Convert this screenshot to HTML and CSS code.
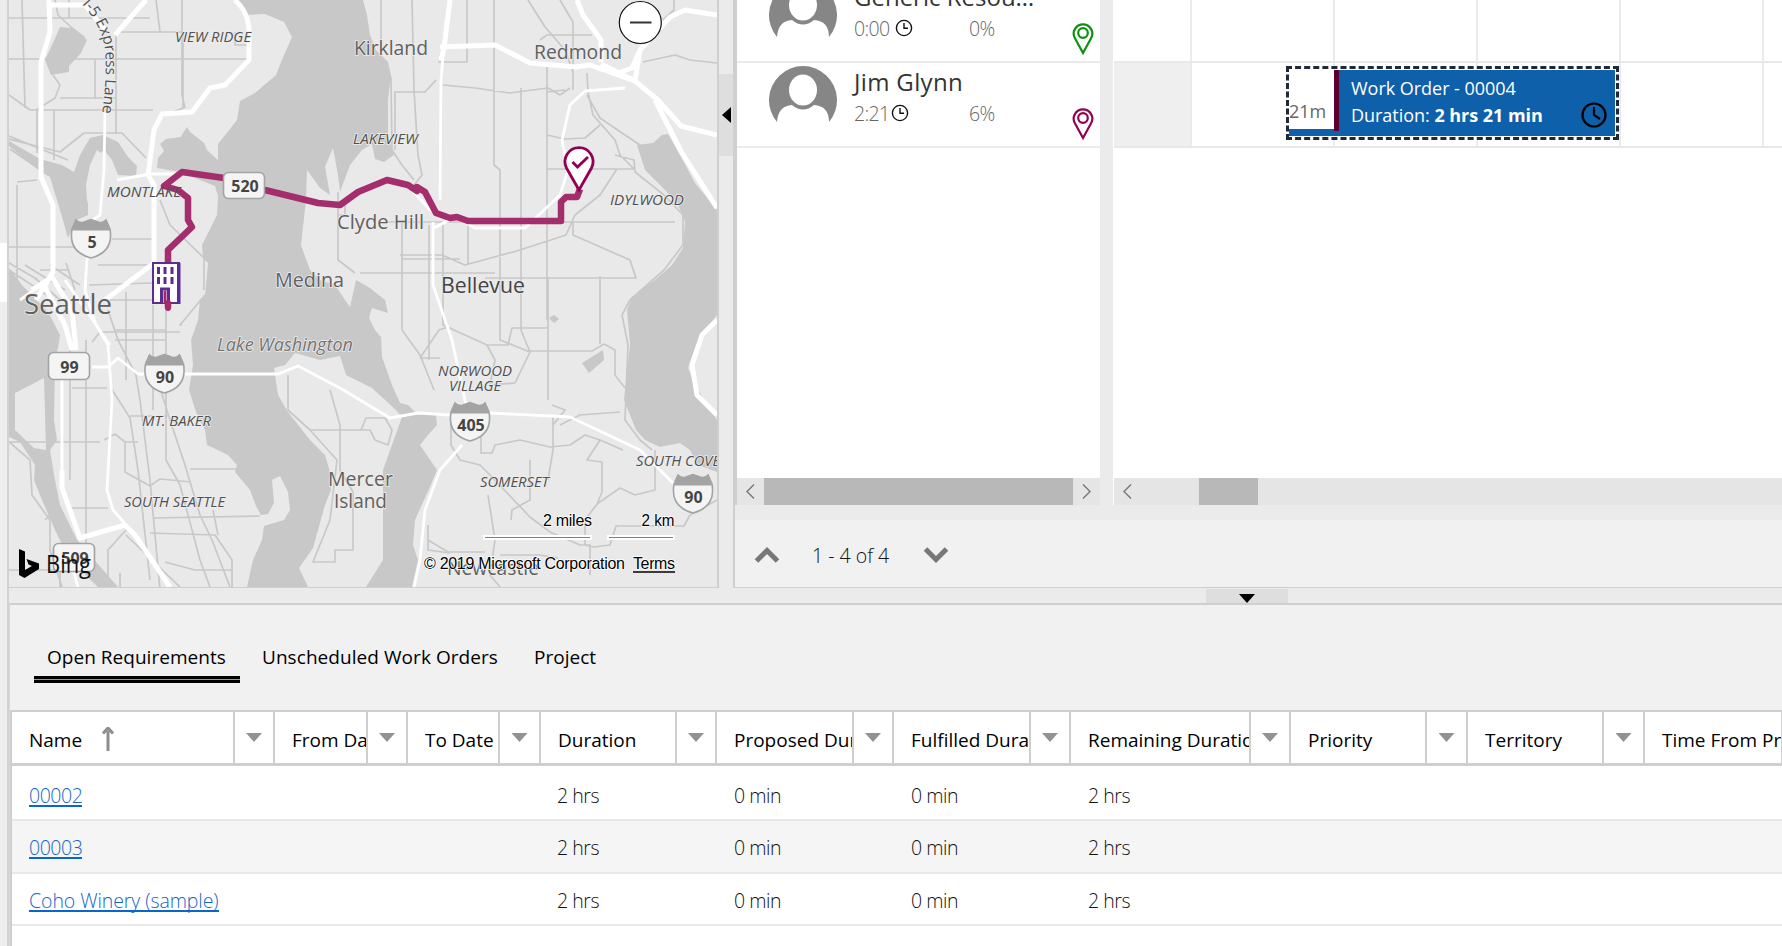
FILE: index.html
```html
<!DOCTYPE html>
<html lang="en">
<head>
<meta charset="utf-8">
<title>Schedule Board</title>
<link rel="stylesheet" href="styles.css">
</head>
<body>
<div class="app">
  <aside class="rail"></aside>
  <main class="board">
    <div class="top">
      <section class="map-panel">
        <svg class="map" viewBox="9 0 708 587" width="708" height="587">
          <defs>
            <path id="express" d="M82 4 Q104 28 105.500 55 Q107 80 101 122"/>
            <symbol id="interstate" viewBox="0 0 42 42">
              <path d="M6 2 Q10 6 14 4 L21 1.500 L28 4 Q32 6 36 2 L40 11 Q44 34 21 40 Q-2 34 2 11Z" fill="#f4f4f4" stroke="#a3a3a3" stroke-width="1.600"/>
              <path d="M6 2 Q10 6 14 4 L21 1.500 L28 4 Q32 6 36 2 L40 12.500 H2Z" fill="#a3a3a3"/>
            </symbol>
          </defs>
          <g class="water">
            <path d="M235 0L243 15L265 14L284 22L292 37L281 62L276 75L255 93L240 101L237 120L218 144V160L207 150L204 143L190 132L187 127L183 133L181 137L166 139L160 144L164 151L158 158L157 168L180 172L215 186L218 196L217 215L202 245L203 258L208 263L205 296L200 300L198 320L191 340L193 365L189 390L196 412L205 430L207 445L228 455L237 465L235 472L250 490L256 506L261 515L268 514L274 503L272 480L280 476L288 492L290 510L284 520L264 526L262 540L253 560L247 587H412L418 560L413 545L415 520L430 487L437 470L420 445L428 435L437 425L436 415L415 412L408 405L400 403L392 385L382 357L381 337L375 330L369 318L372 308L388 313L385 300L370 288L356 280L350 307L345 300L335 285L320 280L310 270L301 245L306 200L307 170L320 188L330 195L325 167L333 148L338 175L340 192L350 165L362 150L372 144L375 159L384 162L394 155L388 135V100L391 75L388 62L376 50L370 35L367 15L363 0Z"/>
            <path d="M637 145L653 143L662 135L668 134L680 155L695 183L717 210V315L706 330L696 345L688 368L695 385L717 420V472L698 465L690 450L680 443L660 447L645 440L636 430L624 400L630 345L627 310L632 297L655 280L672 265L683 248L685 222L678 205L665 190L645 170Z"/>
            <path d="M60 27L72 28L87 40L81 53L69 66V72L51 75L45 60L52 45Z"/>
            <path d="M9 141L40 159L62 165L74 172L80 155L90 138L103 135L118 142L128 157L137 166L136 176L118 175L112 160L104 150L93 160L88 180V215L77 220L68 238L60 210L50 177L36 168L9 146Z"/>
            <path d="M9 268L22 285L48 312L60 335L58 348L55 360L54 420L57 440L50 450L54 475L60 505L77 540L90 555L118 587H98L70 560L55 530L42 500L34 480L35 465L20 442L9 437Z"/>
            <path d="M582 363L603 350L604 360L589 373ZM549 318L554 315L559 319L554 323Z"/>
          </g>
          <path class="land" d="M274 368L285 365L295 353L320 360L340 356L346 375L372 388L396 410L402 417L383 470V560L366 587H308L299 568L313 548L325 505L331 490V475L325 455L310 440L288 412L278 395Z"/>
          <path class="land" d="M15 393L44 378L46 450L34 448L15 430ZM97 150L107 158L102 180L98 215L94 222L87 200L86 185L90 165Z"/>
          <g class="minor">
            <path d="M22 0L25 108M9 18H150M9 59H247M60 98H116M30 110H153M69 0V18M95 60V98M156 0L160 32H183V108L162 116M182 0V95L185 108M118 32H183M235 32V45H247M116 30V134M37 110V153M54 110V160M9 95L30 110M55 0L58 15L72 28L85 38M53 75L60 85L55 98L36 110M9 139L60 152L84 133H122L146 158M9 136L68 160M10 149L48 175M17 182L37 180M17 185V290M9 247H78M112 239H152M9 263L35 278L60 300M40 270H68M66 263L75 290M98 265H152M89 285L152 283M100 300H166M160 200L170 225L204 258V290"/>
            <path d="M9 270L50 297M25 265L65 290M50 265L80 285M108 310L118 340L136 375L140 400L150 480L160 590M126 292V380M153 305V410M166 308V460M180 332H100L92 342M205 295L180 325H182M115 330H165M115 340H165M70 345V480M86 340V545M72 388H107M111 388L130 418L138 470L150 580M9 442H100M104 440L115 434L125 442H138M125 442V472L150 486L160 479L191 482M166 460L180 485L200 560L210 587M156 375L170 420L185 465L200 515L212 540L230 587M130 416H168M70 508H108M190 469H237M153 518L260 516M150 533L215 535L232 560V587M165 562L195 570H232M213 510L218 535M126 530L108 550V582M126 535L180 587M9 442L30 460L32 495L50 520V550L62 587M9 570H60V587M120 573V587M57 508L45 520"/>
            <path d="M381 0V60L391 78L392 150L402 165L414 180M412 0L414 90L418 155L422 175L410 190M438 62H467V0M494 0V165L500 170V220M443 85L475 88L510 93L548 88L560 95L570 88M395 150V92H425L436 80M521 88V290M547 62V320M547 92L565 90M528 0L545 27L565 50L573 72M573 65V90M560 0L573 22V65M540 40L547 35H592M674 0V10L663 20M643 62L675 55L690 60L717 63M547 135L565 139L585 138L600 125M547 169H634L620 155L615 140L593 115L588 92L587 73M587 95L600 118L625 135L640 145M615 155L634 160L635 172L664 195L683 215V245L664 270L630 300L622 315L628 345L625 420L640 440L652 450M617 169L600 195L575 215L566 235L520 250L465 265L442 255H400M384 222H675M573 222V235L630 260L636 278H485M360 273H495M402 222V259H460M402 230V330L420 355L434 390M429 225V360M443 225V325L487 345L508 345L512 328H547M500 222V340L530 352M521 280V330L530 352L515 383M548 278V400M529 351H592L604 344L615 350V375L625 388M600 276V344M468 225V265"/>
            <path d="M420 358L439 330L448 327M420 358H440M487 345L495 360L490 385L515 383M451 415V445L460 460L480 465L490 475L530 517L550 532L580 545H590V575M481 420V453H492L495 445L520 440L550 447L570 445L585 435L600 440L623 450M553 415V450L548 480M530 460V500L512 510L511 520M620 412L580 415L560 425M552 405L565 410L553 425M655 450V490L635 495L620 488L597 504L585 520V545L594 547L610 545L616 526H684L690 515M600 440L587 460L602 462V492L597 504M488 495L495 540L490 575L500 587M428 525V550L450 553M428 540L448 552H485M500 555H540L558 558M330 390L340 425V470L353 492V550H335V562H313L330 520L337 460L310 430M310 430H370M361 430L366 418L385 418L392 430L388 445L375 440L370 430H361M288 375V410L310 430M338 192V260L355 273M338 215H345V200M690 515L717 500"/>
          </g>
          <g class="major">
            <path d="M49 0L50 32L41 62V177L53 205V272L36 300M49 5L85 5L105 30M146 0L115 35M235 0Q250 14 249 35V60L225 85L210 88L192 112L162 114L154 130L148 175L154 185V263L105 300"/>
            <path d="M450 0L444 48L441 60M440 47L495 45L530 63L576 67L590 65L635 81L640 50L670 17L685 10L717 15M577 0L583 15L601 40V62M601 64L635 81L658 100L681 126L717 135M655 100L682 153L717 208M640 50L632 68L615 74M717 320L702 335L692 365L697 395L717 415M32 290L52 277L72 310L76 350M45 287L65 325L72 350M62 470V488L80 538L125 525L135 535L170 587"/>
          </g>
          <g class="mid">
            <path d="M105 112L104 170L100 215L90 222M87 258L85 290L96 325L108 345L112 400L107 490L113 510L135 535M446 20L441 80L440 200M175 174H150L117 180M412 190L430 210L438 215M433 222V285L452 340L466 405M434 228L455 217L475 228H525L560 195L568 170L562 140L570 105L585 91L625 88M52 278L36 290M45 282L20 300M65 280L110 345M62 470V380M92 367H108L118 358L138 374H278L298 366L340 388L390 418L418 413L450 415M490 413L570 417L640 450L680 490M462 445L440 470L425 510L420 560L414 587M66 545L78 587"/>
          </g>
          <g class="place">
            <text x="175" y="41.500" textLength="76" lengthAdjust="spacingAndGlyphs">VIEW RIDGE</text>
            <text x="353" y="143.500" textLength="65" lengthAdjust="spacingAndGlyphs">LAKEVIEW</text>
            <text x="610" y="204.500" textLength="74" lengthAdjust="spacingAndGlyphs">IDYLWOOD</text>
            <text x="438" y="376" textLength="74" lengthAdjust="spacingAndGlyphs">NORWOOD</text>
            <text x="449" y="391" textLength="52" lengthAdjust="spacingAndGlyphs">VILLAGE</text>
            <text x="142" y="425.500" textLength="69" lengthAdjust="spacingAndGlyphs">MT. BAKER</text>
            <text x="124" y="506.500" textLength="101" lengthAdjust="spacingAndGlyphs">SOUTH SEATTLE</text>
            <text x="480" y="486.500" textLength="69" lengthAdjust="spacingAndGlyphs">SOMERSET</text>
            <text x="636" y="466" textLength="84" lengthAdjust="spacingAndGlyphs">SOUTH COVE</text>
          </g>
          <path class="route" d="M168 308V250L192 227L188 220V198L178 190L164 186L182 172L224 178L265 190L318 203L340 205L358 192L387 180L408 185L417 191V187L425 192L436 213L450 218L457 217L468 221H561V202L566 197H577L580 189"/>
          <text class="montlake" x="107" y="197" textLength="74" lengthAdjust="spacingAndGlyphs">MONTLAKE</text>
          <g class="town">
            <text x="354" y="55" textLength="74" lengthAdjust="spacingAndGlyphs">Kirkland</text>
            <text x="534" y="59" textLength="88" lengthAdjust="spacingAndGlyphs">Redmond</text>
            <text x="337" y="229" textLength="87" lengthAdjust="spacingAndGlyphs">Clyde Hill</text>
            <text x="275" y="286.500" textLength="69" lengthAdjust="spacingAndGlyphs">Medina</text>
            <text x="328" y="485.500" textLength="65" lengthAdjust="spacingAndGlyphs">Mercer</text>
            <text x="334" y="507.500" textLength="53" lengthAdjust="spacingAndGlyphs">Island</text>
            <text x="447" y="575" textLength="92" lengthAdjust="spacingAndGlyphs">Newcastle</text>
            <text class="dark" x="441" y="293" textLength="84" lengthAdjust="spacingAndGlyphs">Bellevue</text>
            <text class="city" x="24" y="313.500" textLength="88" lengthAdjust="spacingAndGlyphs">Seattle</text>
            <text class="lake" x="217" y="350.500" textLength="136" lengthAdjust="spacingAndGlyphs">Lake Washington</text>
          </g>
          <text class="road-name"><textPath href="#express">I-5 Express Lane</textPath></text>
          <use href="#interstate" x="70" y="218" width="42" height="42"/>
          <use href="#interstate" x="143.500" y="353" width="42" height="42"/>
          <use href="#interstate" x="449" y="401" width="42" height="42"/>
          <use href="#interstate" x="672" y="473" width="42" height="42"/>
          <g class="plate">
            <rect x="223.500" y="172.500" width="41" height="26" rx="5"/>
            <rect x="48.500" y="352.500" width="41" height="27" rx="5"/>
            <rect x="53.500" y="543.500" width="41" height="28" rx="5"/>
          </g>
          <g class="num">
            <text x="92" y="248">5</text>
            <text x="165" y="382.500">90</text>
            <text x="471" y="431">405</text>
            <text x="693.500" y="503">90</text>
            <text x="245" y="192">520</text>
            <text x="69.500" y="373">99</text>
            <text x="75" y="564">509</text>
          </g>
          <g>
            <rect x="153" y="263" width="26" height="40" fill="#fff" stroke="#5c2d91" stroke-width="2"/>
            <path d="M177 263h3.500v41h-3.500z" fill="#5c2d91"/>
            <path d="M157 267h3v7h-3zm6.500 0h3v7h-3zm7 0h3v7h-3zM157 277h3v7h-3zm6.500 0h3v7h-3zm7 0h3v7h-3z" fill="#5c2d91"/>
            <path d="M161.500 303V289H168.500V303" fill="#fff" stroke="#5c2d91" stroke-width="3"/>
            <path d="M165 290.500V303" stroke="#a3296b" stroke-width="3"/>
            <path d="M168 303V308" stroke="#a3296b" stroke-width="6" stroke-linecap="round"/>
          </g>
          <path d="M579 190L567.500 168Q561 146.500 579 146.500Q597 146.500 590.500 168Z" fill="#fff" stroke="none"/>
          <path d="M579 190L566.500 168A14 14 0 1 1 591.500 168Z" fill="#fff" stroke="#910053" stroke-width="2.800"/>
          <path d="M572.500 162L577.500 167L588 157" fill="none" stroke="#910053" stroke-width="2.800"/>
          <circle cx="640.300" cy="22.500" r="21" fill="#fff" stroke="#111" stroke-width="1.200"/>
          <path d="M630 22.500H651.500" stroke="#333" stroke-width="2"/>
          <path d="M19 549L25 551.500V570L32 566L28.500 564.500L26.500 559L39 563.500V569L24.500 578L19 575Z"/>
          <text class="bing" x="46" y="573" textLength="45" lengthAdjust="spacingAndGlyphs">Bing</text>
          <g class="legal">
            <text x="543" y="526" textLength="49">2 miles</text>
            <text x="641.500" y="526" textLength="33" lengthAdjust="spacingAndGlyphs">2 km</text>
            <text x="424" y="569" textLength="201">© 2019 Microsoft Corporation</text>
            <text x="633" y="569" textLength="42">Terms</text>
          </g>
          <path d="M633 572H675" stroke="#000" stroke-width="1.500"/>
          <path d="M483 537.500H592M607 537.500H675" stroke="#fff" stroke-width="5"/>
          <path d="M485 537.500H590M609 537.500H673" stroke="#3f8ae8" stroke-width="1.200"/>
        </svg>
      </section>
      <div class="split-v"><div class="split-v-btn"><svg width="9" height="16" viewBox="0 0 9 16"><path d="M9 0V16L0 8Z"/></svg></div></div>
      <section class="schedule">
        <div class="lanes">
          <div class="resources">
            <div class="people">
              <article class="person first">
                <svg class="avatar" viewBox="0 0 68 56" width="68" height="56"><path d="M8 56A34 34 0 1 1 60 56Q60 40 45 39Q34 48 23 39Q9 40 8 56Z" fill="#868686"/><ellipse cx="34" cy="24" rx="14" ry="15.500" fill="#fff"/></svg>
                <div class="who"><h3 class="long">Generic Resou…</h3><div class="stats"><span class="hours">0:00</span><svg class="clock" width="18" height="18" viewBox="0 0 18 18"><circle cx="9" cy="9" r="7.600"/><path d="M9 4V9.300H13"/></svg><span class="pct">0%</span></div></div>
                <svg class="pin green" width="22" height="34" viewBox="0 0 22 34"><path d="M11 31L2.800 16A9.300 9.300 0 1 1 19.200 16Z"/><circle cx="11" cy="11" r="4.800"/></svg>
              </article>
              <article class="person">
                <svg class="avatar" viewBox="0 0 68 56" width="68" height="56"><path d="M8 56A34 34 0 1 1 60 56Q60 40 45 39Q34 48 23 39Q9 40 8 56Z" fill="#868686"/><ellipse cx="34" cy="24" rx="14" ry="15.500" fill="#fff"/></svg>
                <div class="who"><h3>Jim Glynn</h3><div class="stats"><span class="hours jim">2:21</span><svg class="clock" width="18" height="18" viewBox="0 0 18 18"><circle cx="9" cy="9" r="7.600"/><path d="M9 4V9.300H13"/></svg><span class="pct">6%</span></div></div>
                <svg class="pin plum" width="22" height="34" viewBox="0 0 22 34"><path d="M11 31L2.800 16A9.300 9.300 0 1 1 19.200 16Z"/><circle cx="11" cy="11" r="4.800"/></svg>
              </article>
            </div>
            <div class="scroll">
              <svg width="27" height="27" viewBox="0 0 27 27"><path d="M17 6.500L10 13.500L17 20.500"/></svg>
              <div class="thumb wide"></div>
              <svg width="27" height="27" viewBox="0 0 27 27"><path d="M10 6.500L17 13.500L10 20.500"/></svg>
            </div>
          </div>
          <div class="gutter"></div>
          <div class="timeline">
            <div class="grid">
              <div class="slots upper"><i></i><i></i><i></i><i></i><i></i></div>
              <div class="slots"><i class="off"></i><i></i><i></i><i></i><i></i></div>
              <div class="booking">
                <div class="travel">21m</div>
                <div class="bar"></div>
                <div class="job"><div>Work Order - 00004</div><div>Duration: <b>2 hrs 21 min</b></div></div>
                <svg class="job-clock" width="28" height="28" viewBox="0 0 28 28"><circle cx="14" cy="14" r="11.500"/><path d="M14 6V14L20 18"/></svg>
              </div>
            </div>
            <div class="scroll">
              <svg width="27" height="27" viewBox="0 0 27 27"><path d="M17 6.500L10 13.500L17 20.500"/></svg>
              <div class="thumb small"></div>
            </div>
          </div>
        </div>
        <div class="strip"></div>
        <div class="pager">
          <svg width="26" height="18" viewBox="0 0 26 18"><path d="M2.500 15L13 4.500L23.500 15"/></svg>
          <span>1 - 4 of 4</span>
          <svg width="26" height="18" viewBox="0 0 26 18"><path d="M2.500 3L13 13.500L23.500 3"/></svg>
        </div>
        <div class="split-h"><div class="split-h-btn"><svg width="16" height="9" viewBox="0 0 16 9"><path d="M0 0H16L8 9Z"/></svg></div></div>
      </section>
    </div>
    <section class="requirements">
      <nav class="tabs"><a class="active">Open Requirements</a><a class="t2">Unscheduled Work Orders</a><a class="t3">Project</a></nav>
      <div class="table">
        <div class="row head">
          <div class="th">Name <svg class="sort" width="12" height="24" viewBox="0 0 12 24"><path d="M6 24V4M1 6.500L6 1L11 6.500" fill="none" stroke="#8d8d8d" stroke-width="3"/></svg></div><div class="dd"></div>
          <div class="th">From Date</div><div class="dd"></div>
          <div class="th">To Date</div><div class="dd"></div>
          <div class="th">Duration</div><div class="dd"></div>
          <div class="th">Proposed Duration</div><div class="dd"></div>
          <div class="th">Fulfilled Duration</div><div class="dd"></div>
          <div class="th">Remaining Duration</div><div class="dd"></div>
          <div class="th">Priority</div><div class="dd"></div>
          <div class="th">Territory</div><div class="dd"></div>
          <div class="th">Time From Promised</div>
        </div>
        <div class="row data"><a class="id">00002</a><span>2 hrs</span><span>0 min</span><span>0 min</span><span>2 hrs</span></div>
        <div class="row data alt"><a class="id">00003</a><span>2 hrs</span><span>0 min</span><span>0 min</span><span>2 hrs</span></div>
        <div class="row data third"><a class="id name">Coho Winery (sample)</a><span>2 hrs</span><span>0 min</span><span>0 min</span><span>2 hrs</span></div>
      </div>
    </section>
  </main>
</div>
</body>
</html>
```
FILE: styles.css
```css
* { box-sizing: border-box; }
body { margin: 0; background: #fff; font-family: "Open Sans", "Noto Sans", sans-serif; color: #000; }
.app { display: flex; width: 1782px; height: 946px; overflow: hidden; }
.rail { width: 7px; background: linear-gradient(#ececec 243px, #fff 243px, #fff 302px, #eee 302px); }
.board { width: 1775px; border-left: 2px solid #d2d2d2; background: #ebebeb; display: flex; flex-direction: column; }
.top { display: flex; height: 603px; }

/* Map */
.map-panel { width: 710px; height: 588px; border-right: 2px solid #cfcfcf; border-bottom: 1px solid #cfcfcf; overflow: hidden; }
.map { display: block; background: #e9e9e9; }
.water { fill: #c8c8c8; }
.land { fill: #e9e9e9; }
.minor { fill: none; stroke: #c8c8c8; stroke-width: 1.7; stroke-linejoin: round; }
.major { fill: none; stroke: #fff; stroke-width: 5; stroke-linejoin: round; }
.mid { fill: none; stroke: #fff; stroke-width: 2.8; stroke-linejoin: round; }
.route { fill: none; stroke: #a32d6d; stroke-width: 6.5; stroke-linejoin: round; }
.map text { paint-order: stroke; stroke: #eee; stroke-width: 1.5px; }
.place text, .montlake { font-size: 15px; font-style: italic; fill: #505050; }
.map .montlake { stroke: none; }
.town text { font-size: 20px; fill: #606060; }
.town .dark { font-size: 21px; fill: #444; }
.town .city { font-size: 28px; }
.town .lake { font-size: 18.5px; font-style: italic; fill: #737373; }
.road-name { font-size: 15.3px; fill: #505050; }
.plate { fill: #f4f4f4; stroke: #a3a3a3; stroke-width: 1.6; }
.map .num text { font-size: 16px; font-weight: 700; fill: #444; text-anchor: middle; stroke: none; }
.map .bing { font-size: 25px; stroke: none; fill: #111; }
.legal text { font: 16px "Liberation Sans", Arial, sans-serif; fill: #000; stroke: #fff; }

/* Splitters */
.split-v { width: 14px; padding-top: 74px; }
.split-v-btn { height: 82px; background: #dedede; display: flex; align-items: center; justify-content: center; }
.split-h { height: 15px; padding: 1px 0 0 473px; background: #ebebeb; margin-left: -2px; position: relative; }
.split-h-btn { width: 82px; height: 14px; background: #dedede; display: flex; align-items: flex-end; justify-content: center; }

/* Schedule */
.schedule { flex: 1; min-width: 0; border-left: 2px solid #cfcfcf; }
.lanes { height: 505px; display: flex; border-left: 2px solid #cfcfcf; }
.resources { width: 363px; background: #fff; display: flex; flex-direction: column; }
.people { height: 478px; overflow: hidden; }
.person { height: 85px; border-bottom: 2px solid #ebebeb; display: flex; padding-left: 32px; }
.person.first { margin-top: -22px; }
.avatar { margin-top: 3px; flex: none; }
.who { margin-left: 17px; width: 219px; flex: none; }
.who h3 { margin: 2px 0 0; font-size: 24px; line-height: 34px; font-weight: 400; color: #333; letter-spacing: .35px; white-space: nowrap; }
.who .long { letter-spacing: 0; }
.stats { display: flex; align-items: center; height: 27px; font-size: 19.5px; font-weight: 300; color: #666; margin-top: 1px; }
.hours { width: 41px; letter-spacing: -.6px; }
.hours.jim { width: 37px; }
.clock { fill: none; stroke: #111; stroke-width: 1.4; margin-top: -2px; }
.pct { margin-left: auto; width: 104px; letter-spacing: -.6px; }
.pin { margin: 44px 0 0 -1px; fill: none; stroke-width: 2.2; }
.green { stroke: #0d8f10; }
.plum { stroke: #910053; }
.gutter { width: 13px; background: #ebebeb; }
.timeline { flex: 1; min-width: 0; border-left: 1px solid #fff; background: #fff; }
.grid { height: 478px; position: relative; }
.slots { display: flex; height: 85px; border-bottom: 2px solid #e8e8e8; overflow: hidden; }
.slots.upper { height: 63px; }
.slots i { flex: none; width: 143px; border-right: 2px solid #ebebeb; }
.slots i:first-child { width: 78px; }
.off { background: #efefef; }
.booking { position: absolute; left: 172px; top: 66px; width: 333px; height: 74px; border: 3px dashed #1f2937; display: flex; padding: 1px; background: #fff; }
.travel { width: 45px; height: 66px; border-bottom: 7px solid #0f60aa; margin-left: -1px; padding-top: 27px; font-size: 18px; line-height: 28px; color: #666; }
.bar { width: 5px; height: 66px; background: linear-gradient(#5c0030 61px, #0f60aa 61px); }
.job { flex: 1; background: #0f60aa; color: #fff; padding: 5px 0 0 12px; font-size: 18px; line-height: 27px; letter-spacing: -.03px; white-space: nowrap; }
.job-clock { position: absolute; right: 8px; top: 32px; fill: none; stroke: #000; stroke-width: 2.2; }
.scroll { height: 27px; display: flex; background: #e5e5e5; }
.scroll svg { fill: none; stroke: #777; stroke-width: 1.4; flex: none; }
.thumb { background: #b8b8b8; height: 27px; }
.thumb.wide { width: 309px; }
.thumb.small { width: 59px; margin-left: 58px; }
.strip { height: 15px; background: #ebebeb; }
.pager { height: 68px; background: #f1f1f1; border-bottom: 1px solid #cfcfcf; display: flex; align-items: center; padding: 3px 0 0 19px; font-size: 19.5px; font-weight: 300; color: #111; }
.pager svg { fill: none; stroke: #777; stroke-width: 5; }
.pager span { margin: 0 34px 0 32px; width: 77px; white-space: nowrap; }

/* Requirements */
.requirements { flex: 1; border-top: 2px solid #cfcfcf; border-left: 1px solid #d8d8d8; background: #f1f1f1; display: flex; flex-direction: column; }
.tabs { height: 105px; padding: 37px 0 0 24px; display: flex; font-size: 19px; line-height: 30px; letter-spacing: .03px; white-space: nowrap; }
.tabs a { height: 41px; }
.active { width: 206px; padding-left: 13px; background: linear-gradient(#000 3px, #999 3px, #999 4px, #000 4px) 0 34px / 100% 7px no-repeat; }
.t2 { margin-left: 22px; width: 272px; letter-spacing: .06px; }
.table { flex: 1; background: #fff; border-left: 2px solid #cfcfcf; }
.head { height: 56px; border-top: 2px solid #cfcfcf; border-bottom: 3px solid #cfcfcf; display: grid; grid-template-columns: 223px 40px 93px 40px 92px 41px 136px 40px 137px 40px 137px 40px 180px 40px 136px 41px 136px 41px 138px; }
.th { overflow: hidden; white-space: nowrap; border-right: 2px solid #cfcfcf; padding-left: 17px; font-size: 19px; line-height: 56px; }
.dd { border-right: 2px solid #cfcfcf; display: flex; justify-content: center; padding-top: 21px; }
.dd::before { content: ""; width: 16px; height: 9px; background: #929292; clip-path: polygon(0 0, 100% 0, 50% 100%); }
.sort { margin-left: 15px; vertical-align: -4px; }
.data { border-bottom: 2px solid #e8e8e8; display: grid; grid-template-columns: 528px 177px 177px 177px 1fr; padding: 0 0 0 17px; align-items: center; font-size: 19.5px; font-weight: 300; letter-spacing: -.45px; color: #111; }
.row.data { height: 55px; padding-top: 6px; }
.row.data.alt { height: 53px; background: #f5f5f5; padding-top: 2px; }
.row.data.third { height: 52px; padding-top: 3px; }
.id { justify-self: start; color: #1667c5; line-height: 24px; border-bottom: 2px solid #0b66cc; height: 23px; white-space: nowrap; }
.name { letter-spacing: -.08px; }
```
